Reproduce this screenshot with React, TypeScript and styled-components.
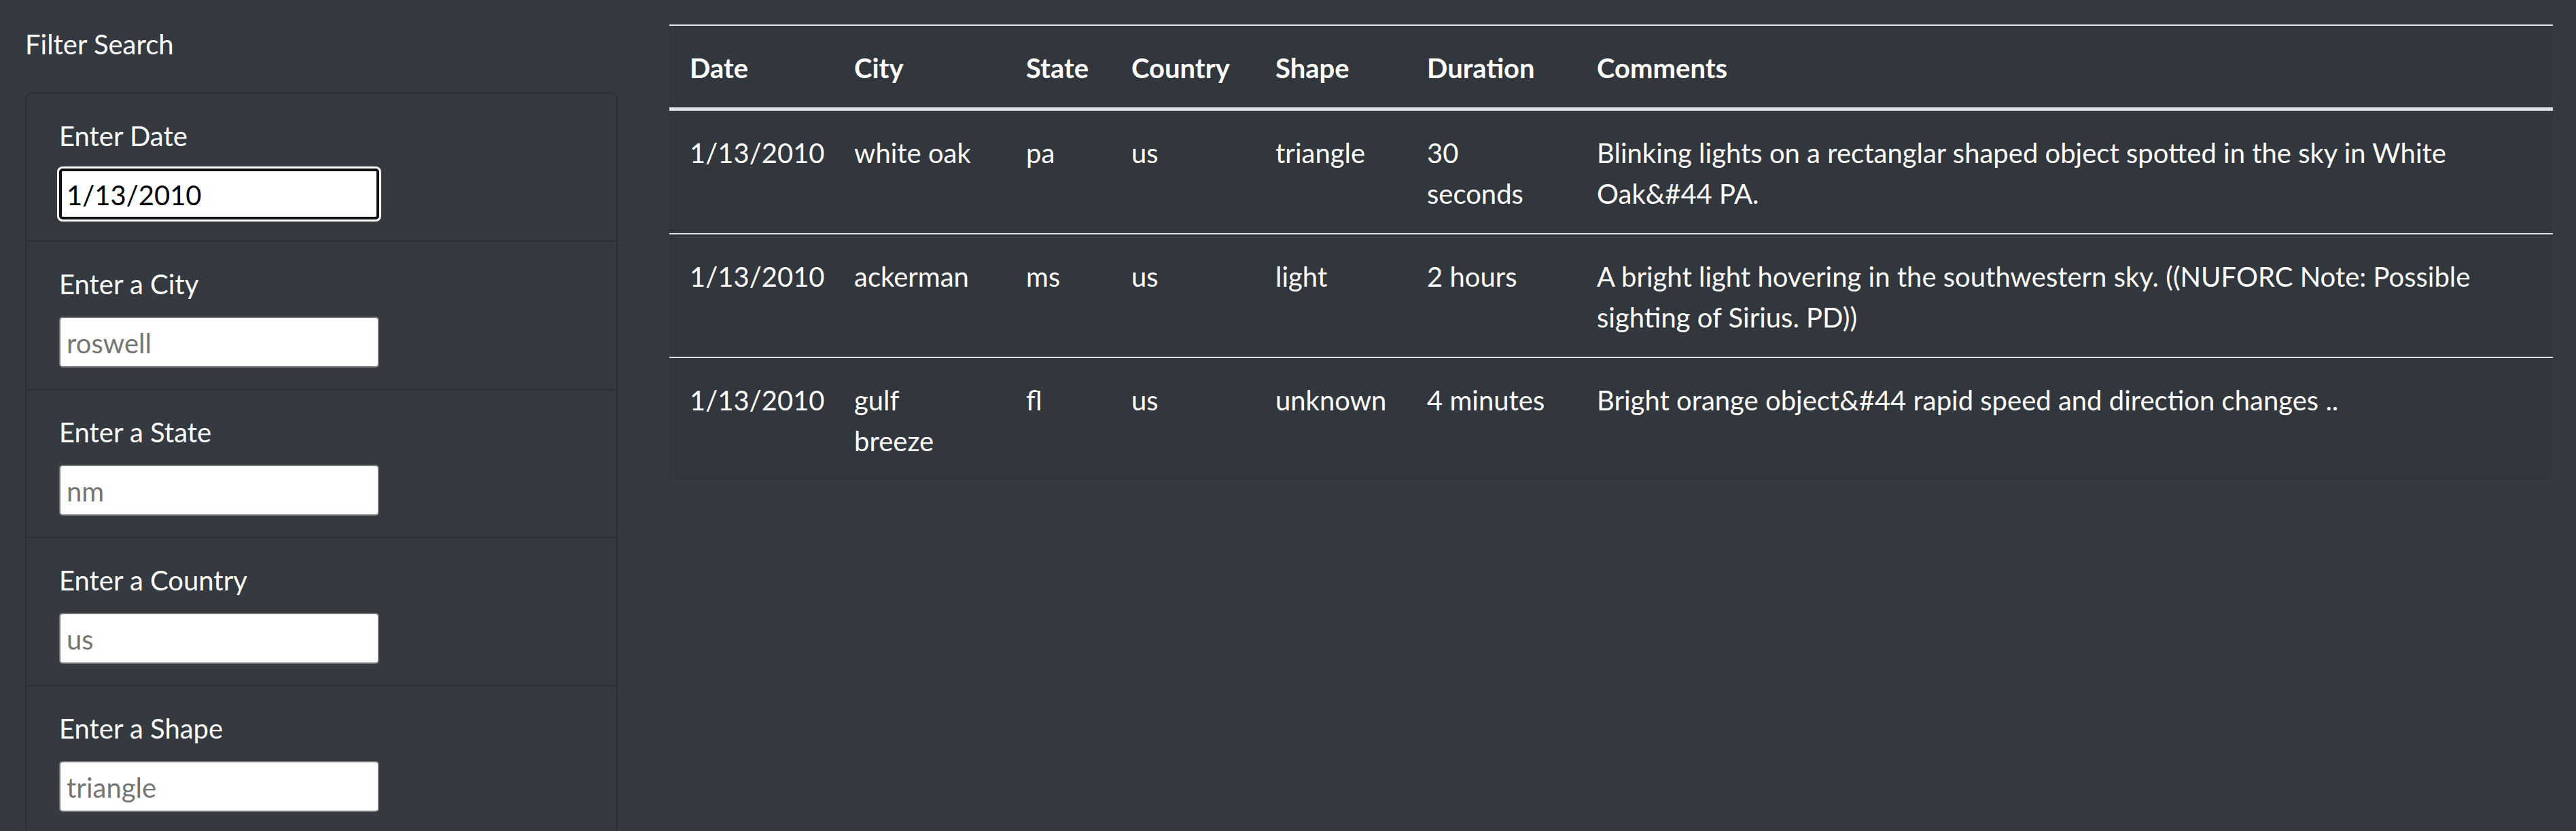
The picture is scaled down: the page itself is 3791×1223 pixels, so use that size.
import React from "react";
import styled, { createGlobalStyle, css } from "styled-components";

const GlobalStyle = createGlobalStyle`
  * {
    box-sizing: border-box;
  }
  html, body {
    margin: 0;
    background: #353a41;
  }
  body {
    font-family: "Segoe UI", Lato, "Liberation Sans", sans-serif;
    font-size: 40px;
    line-height: 60px;
    color: #fff;
  }
`;

const Page = styled.div`
  display: flex;
  align-items: flex-start;
`;

const Sidebar = styled.aside`
  flex: 0 0 948px;
  padding: 35px 39px 0 37px;
`;

const Heading = styled.div`
  font-size: 40px;
  line-height: 60px;
  margin-bottom: 41px;
`;

const FilterList = styled.ul`
  list-style: none;
  margin: 0;
  padding: 0;
  border: 2.5px solid #2b2f35;
  border-radius: 10px;
`;

const FilterItem = styled.li`
  padding: 30px 48px 31px;

  & + & {
    border-top: 2.5px solid #2b2f35;
  }
`;

const Label = styled.label`
  display: block;
  line-height: 60px;
  padding-top: 2px;
  margin-bottom: 18px;
`;

const TextInput = styled.input<{ $focused?: boolean }>`
  display: block;
  width: 471px;
  height: 75px;
  padding: 2px 9px 0;
  font-family: inherit;
  font-size: 40px;
  color: #000;
  background: #fff;
  border: 2.5px solid #767676;
  border-radius: 5px;
  outline: none;
  caret-color: #000;

  &::placeholder {
    color: #757575;
  }

  ${(p) =>
    p.$focused &&
    css`
      border: 4.5px solid #101010;
      box-shadow: 0 0 0 3px #fff;
      padding: 2px 7px 0;
    `}
`;

const Main = styled.main`
  flex: 1;
  min-width: 0;
  padding: 36px 34px 0 37px;
`;

const Table = styled.table`
  width: 100%;
  border-collapse: collapse;
  table-layout: fixed;
  background: #32363d;
`;

const HeadCell = styled.th`
  text-align: left;
  font-weight: 700;
  padding: 32px 30px 28px;
  vertical-align: bottom;
  border-top: 2.5px solid #dee2e6;
  border-bottom: 5px solid #dee2e6;
`;

const Cell = styled.td`
  padding: 32px 30px 28px;
  vertical-align: top;
  border-top: 2.5px solid #dee2e6;
`;

type Sighting = {
  datetime: string;
  city: string;
  state: string;
  country: string;
  shape: string;
  durationMinutes: string;
  comments: string;
};

const sightings: Sighting[] = [
  {
    datetime: "1/13/2010",
    city: "white oak",
    state: "pa",
    country: "us",
    shape: "triangle",
    durationMinutes: "30 seconds",
    comments:
      "Blinking lights on a rectanglar shaped object spotted in the sky in White Oak&#44 PA.",
  },
  {
    datetime: "1/13/2010",
    city: "ackerman",
    state: "ms",
    country: "us",
    shape: "light",
    durationMinutes: "2 hours",
    comments:
      "A bright light hovering in the southwestern sky. ((NUFORC Note: Possible sighting of Sirius. PD))",
  },
  {
    datetime: "1/13/2010",
    city: "gulf breeze",
    state: "fl",
    country: "us",
    shape: "unknown",
    durationMinutes: "4 minutes",
    comments: "Bright orange object&#44 rapid speed and direction changes ..",
  },
];

const columns = [
  { title: "Date", width: 242 },
  { title: "City", width: 253 },
  { title: "State", width: 155 },
  { title: "Country", width: 212 },
  { title: "Shape", width: 223 },
  { title: "Duration", width: 250 },
  { title: "Comments" },
];

const filters = [
  { id: "datetime", label: "Enter Date", placeholder: "1/1/2010", value: "1/13/2010" },
  { id: "city", label: "Enter a City", placeholder: "roswell" },
  { id: "state", label: "Enter a State", placeholder: "nm" },
  { id: "country", label: "Enter a Country", placeholder: "us" },
  { id: "shape", label: "Enter a Shape", placeholder: "triangle" },
];

function App() {
  return (
    <>
      <GlobalStyle />
      <Page>
        <Sidebar>
          <Heading>Filter Search</Heading>
          <FilterList>
            {filters.map((f) => (
              <FilterItem key={f.id}>
                <Label htmlFor={f.id}>{f.label}</Label>
                <TextInput
                  id={f.id}
                  type="text"
                  placeholder={f.placeholder}
                  defaultValue={f.value}
                  $focused={!!f.value}
                  autoFocus={!!f.value}
                  onFocus={(e) => {
                    const len = e.currentTarget.value.length;
                    e.currentTarget.setSelectionRange(len, len);
                  }}
                />
              </FilterItem>
            ))}
          </FilterList>
        </Sidebar>
        <Main>
          <Table>
            <colgroup>
              {columns.map((c) => (
                <col key={c.title} style={c.width ? { width: c.width } : undefined} />
              ))}
            </colgroup>
            <thead>
              <tr>
                {columns.map((c) => (
                  <HeadCell key={c.title}>{c.title}</HeadCell>
                ))}
              </tr>
            </thead>
            <tbody>
              {sightings.map((s, idx) => (
                <tr key={idx}>
                  <Cell>{s.datetime}</Cell>
                  <Cell>{s.city}</Cell>
                  <Cell>{s.state}</Cell>
                  <Cell>{s.country}</Cell>
                  <Cell>{s.shape}</Cell>
                  <Cell>{s.durationMinutes}</Cell>
                  <Cell>{s.comments}</Cell>
                </tr>
              ))}
            </tbody>
          </Table>
        </Main>
      </Page>
    </>
  );
}

export default App;
